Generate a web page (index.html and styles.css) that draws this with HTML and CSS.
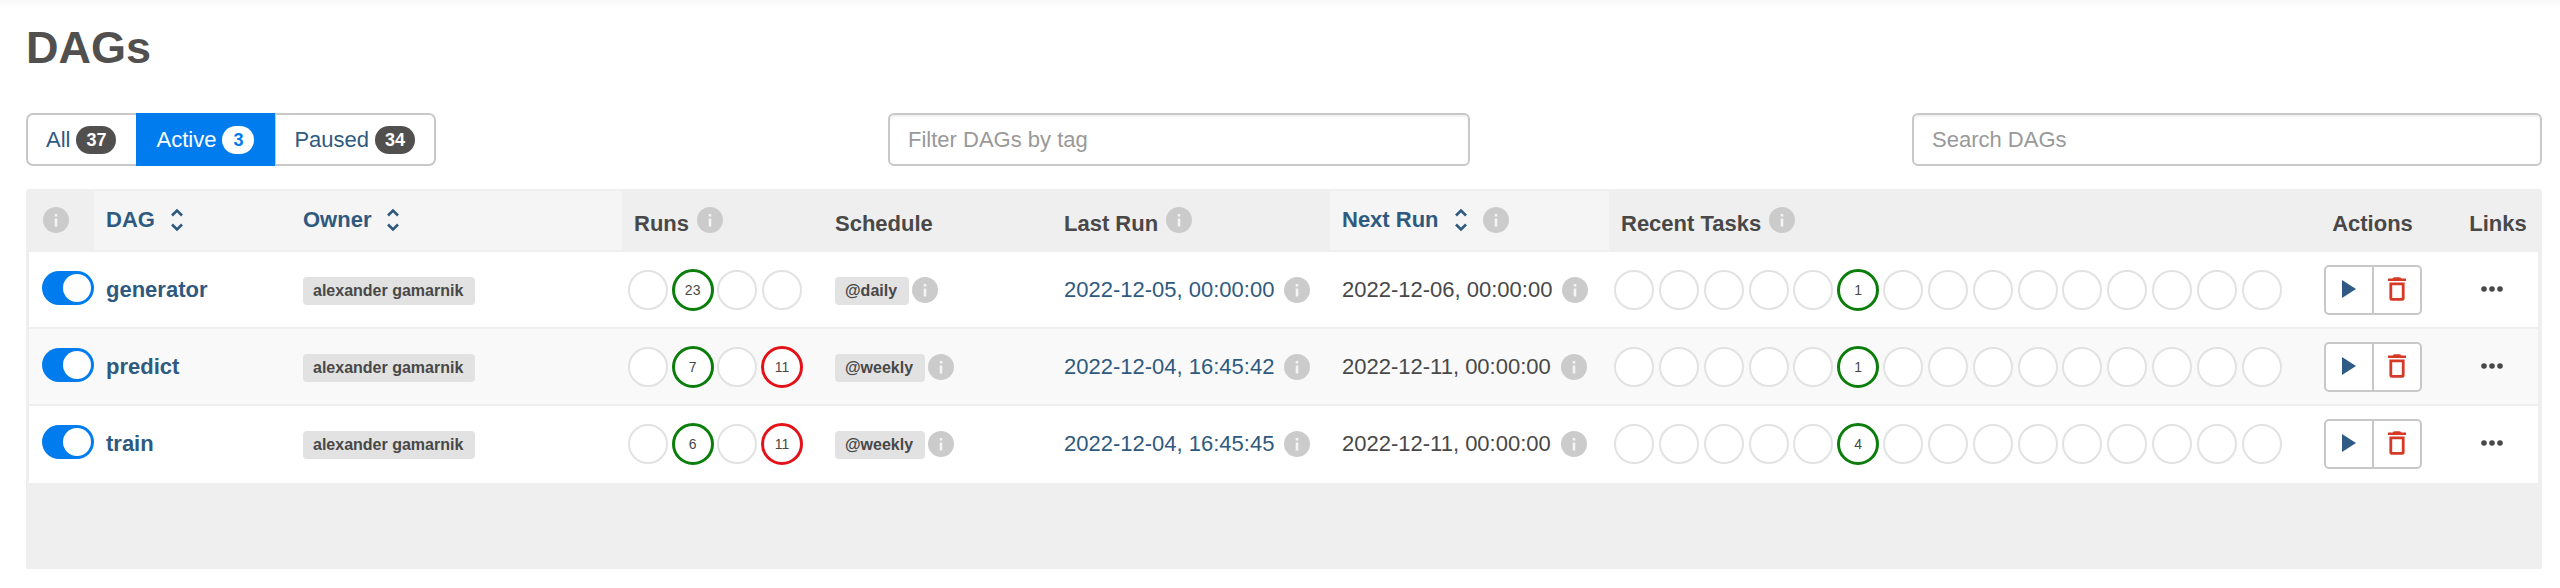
FILE: index.html
```html
<!DOCTYPE html>
<html lang="en">
<head>
<meta charset="utf-8">
<title>DAGs</title>
<link rel="stylesheet" href="styles.css">
</head>
<body>
<svg class="sprite" aria-hidden="true">
  <symbol id="info" viewBox="0 0 26 26"><circle cx="13" cy="13" r="13" fill="#cbcbcb"/><path d="M13 7v2.6M13 11.6v8" stroke="#f4f4f4" stroke-width="2.6"/></symbol>
  <symbol id="sort" viewBox="0 0 14 24"><path d="M2 7.500l5-5 5 5M2 16.500l5 5 5-5" fill="none" stroke="#2f5a80" stroke-width="2.600"/></symbol>
  <symbol id="play" viewBox="0 0 14 18"><path d="M0 0l14 9-14 9z" fill="#2f5a85"/></symbol>
  <symbol id="trash" viewBox="0 0 18 24"><path d="M0 1.600h4.500Q5.500.2 7 .2h4q1.500 0 2.500 1.400H18v2.400H0zM1.400 5.600h15.200v15.600a2.500 2.500 0 0 1-2.500 2.500H3.900a2.500 2.500 0 0 1-2.500-2.500zM4.200 8.300v12.700h9.600V8.300z" fill="#d43a26" fill-rule="evenodd"/></symbol>
  <symbol id="dots" viewBox="0 0 22 6"><g fill="#484848"><circle cx="3" cy="3" r="2.800"/><circle cx="11" cy="3" r="2.800"/><circle cx="19" cy="3" r="2.800"/></g></symbol>
</svg>
<main class="page">
  <h2 class="title">DAGs</h2>
  <div class="toolbar">
    <nav class="filters" aria-label="DAG status">
      <a class="filter" href="#all">All <span class="badge">37</span></a>
      <a class="filter active" href="#active">Active <span class="badge">3</span></a>
      <a class="filter" href="#paused">Paused <span class="badge">34</span></a>
    </nav>
    <input class="field tag-field" type="text" placeholder="Filter DAGs by tag" aria-label="Filter DAGs by tag">
    <input class="field search-field" type="search" placeholder="Search DAGs" aria-label="Search DAGs">
  </div>
  <div class="card">
    <table class="dags">
      <colgroup><col class="c-toggle"><col class="c-dag"><col class="c-owner"><col class="c-runs"><col class="c-schedule"><col class="c-last"><col class="c-next"><col class="c-tasks"><col class="c-actions"><col class="c-links"></colgroup>
      <thead>
        <tr>
          <th><span class="head"><svg class="info"><use href="#info"/></svg></span></th>
          <th class="sortable"><a class="head" href="#dag">DAG <svg class="sort"><use href="#sort"/></svg></a></th>
          <th class="sortable"><a class="head" href="#owner">Owner <svg class="sort"><use href="#sort"/></svg></a></th>
          <th><span class="head">Runs <svg class="info"><use href="#info"/></svg></span></th>
          <th><span class="head">Schedule</span></th>
          <th><span class="head">Last Run <svg class="info"><use href="#info"/></svg></span></th>
          <th class="sortable"><a class="head" href="#next">Next Run <svg class="sort"><use href="#sort"/></svg><svg class="info"><use href="#info"/></svg></a></th>
          <th><span class="head">Recent Tasks <svg class="info"><use href="#info"/></svg></span></th>
          <th><span class="head centered">Actions</span></th>
          <th><span class="head centered">Links</span></th>
        </tr>
      </thead>
      <tbody>
        <tr>
          <td><input class="toggle" type="checkbox" checked aria-label="generator active"></td>
          <td><a class="dag" href="#generator">generator</a></td>
          <td><div class="line tagged"><a class="label" href="#o">alexander gamarnik</a></div></td>
          <td class="runs"><div class="circles"><i></i><i class="ok">23</i><i></i><i></i></div></td>
          <td><div class="line tagged"><a class="label" href="#s">@daily</a><svg class="info"><use href="#info"/></svg></div></td>
          <td><div class="line"><a href="#l">2022-12-05, 00:00:00</a><svg class="info"><use href="#info"/></svg></div></td>
          <td><div class="line"><time>2022-12-06, 00:00:00</time><svg class="info"><use href="#info"/></svg></div></td>
          <td class="tasks"><div class="circles"><i></i><i></i><i></i><i></i><i></i><i class="ok">1</i><i></i><i></i><i></i><i></i><i></i><i></i><i></i><i></i><i></i></div></td>
          <td><div class="actions"><button type="button" aria-label="Trigger DAG"><svg class="play"><use href="#play"/></svg></button><button type="button" aria-label="Delete DAG"><svg class="trash"><use href="#trash"/></svg></button></div></td>
          <td><a class="more" href="#m" aria-label="Links"><svg class="dots"><use href="#dots"/></svg></a></td>
        </tr>
        <tr>
          <td><input class="toggle" type="checkbox" checked aria-label="predict active"></td>
          <td><a class="dag" href="#predict">predict</a></td>
          <td><div class="line tagged"><a class="label" href="#o">alexander gamarnik</a></div></td>
          <td class="runs"><div class="circles"><i></i><i class="ok">7</i><i></i><i class="failed">11</i></div></td>
          <td><div class="line tagged"><a class="label" href="#s">@weekly</a><svg class="info"><use href="#info"/></svg></div></td>
          <td><div class="line"><a href="#l">2022-12-04, 16:45:42</a><svg class="info"><use href="#info"/></svg></div></td>
          <td><div class="line"><time>2022-12-11, 00:00:00</time><svg class="info"><use href="#info"/></svg></div></td>
          <td class="tasks"><div class="circles"><i></i><i></i><i></i><i></i><i></i><i class="ok">1</i><i></i><i></i><i></i><i></i><i></i><i></i><i></i><i></i><i></i></div></td>
          <td><div class="actions"><button type="button" aria-label="Trigger DAG"><svg class="play"><use href="#play"/></svg></button><button type="button" aria-label="Delete DAG"><svg class="trash"><use href="#trash"/></svg></button></div></td>
          <td><a class="more" href="#m" aria-label="Links"><svg class="dots"><use href="#dots"/></svg></a></td>
        </tr>
        <tr>
          <td><input class="toggle" type="checkbox" checked aria-label="train active"></td>
          <td><a class="dag" href="#train">train</a></td>
          <td><div class="line tagged"><a class="label" href="#o">alexander gamarnik</a></div></td>
          <td class="runs"><div class="circles"><i></i><i class="ok">6</i><i></i><i class="failed">11</i></div></td>
          <td><div class="line tagged"><a class="label" href="#s">@weekly</a><svg class="info"><use href="#info"/></svg></div></td>
          <td><div class="line"><a href="#l">2022-12-04, 16:45:45</a><svg class="info"><use href="#info"/></svg></div></td>
          <td><div class="line"><time>2022-12-11, 00:00:00</time><svg class="info"><use href="#info"/></svg></div></td>
          <td class="tasks"><div class="circles"><i></i><i></i><i></i><i></i><i></i><i class="ok">4</i><i></i><i></i><i></i><i></i><i></i><i></i><i></i><i></i><i></i></div></td>
          <td><div class="actions"><button type="button" aria-label="Trigger DAG"><svg class="play"><use href="#play"/></svg></button><button type="button" aria-label="Delete DAG"><svg class="trash"><use href="#trash"/></svg></button></div></td>
          <td><a class="more" href="#m" aria-label="Links"><svg class="dots"><use href="#dots"/></svg></a></td>
        </tr>
      </tbody>
    </table>
  </div>
</main>
</body>
</html>
```
FILE: styles.css
```css
* { box-sizing: border-box; }
body {
  margin: 0;
  background: linear-gradient(#f8f8f8, #fff 8px) no-repeat #fff;
  color: #484848;
  font: 22px/30px "Liberation Sans", Arial, sans-serif;
}
a { color: #2f5a80; text-decoration: none; }
svg { display: block; flex: none; }
.sprite { position: absolute; width: 0; height: 0; }
.page { padding: 18px 18px 18px 26px; }

.title {
  margin: 0 0 35px;
  font-size: 45px;
  line-height: 60px;
  font-weight: 700;
  color: #51504f;
}

.toolbar {
  display: grid;
  grid-template-columns: 862fr 582fr 442fr 630fr;
  align-items: start;
  margin-bottom: 23px;
}
.filters { display: flex; justify-self: start; }
.filter {
  display: flex;
  align-items: center;
  gap: 6px;
  height: 53px;
  padding: 0 19px 0 18px;
  border: 2px solid #c8c8c8;
}
.filter:first-child { padding-right: 20px; border-right: 0; border-radius: 7px 0 0 7px; }
.filter:last-child { border-left-width: 1px; border-radius: 0 7px 7px 0; }
.filter.active { background: #007cee; border-color: #007cee; color: #fff; }
.badge {
  min-width: 32px;
  padding: 0 10px;
  border-radius: 14px;
  background: #51504f;
  color: #fff;
  font-size: 18px;
  line-height: 28px;
  font-weight: 700;
  text-align: center;
}
.active .badge { background: #fff; color: #007cee; }
.field {
  width: 100%;
  height: 53px;
  padding: 0 18px;
  border: 2px solid #c8c8c8;
  border-radius: 6px;
  background: #fff;
  box-shadow: inset 0 2px 2px rgba(0, 0, 0, .06);
  color: #484848;
  font: inherit;
  appearance: none;
}
.field::placeholder { color: #999; opacity: 1; }
.search-field { grid-column: 4; }

.card {
  padding: 0 4px 86px 3px;
  border-radius: 4px 4px 0 0;
  background: #efefef;
}
.dags { width: 100%; table-layout: fixed; border-collapse: separate; border-spacing: 0; }
.c-toggle { width: 65px; }
.c-dag { width: 197px; }
.c-owner { width: 331px; }
.c-runs { width: 201px; }
.c-schedule { width: 229px; }
.c-last { width: 278px; }
.c-next { width: 279px; }
.c-tasks { width: 678px; }
.c-actions { width: 171px; }
.c-links { width: 80px; }

th {
  height: 63px;
  padding: 16px 12px 0;
  border: solid #efefef;
  border-width: 2px 0;
  text-align: left;
  vertical-align: top;
  white-space: nowrap;
}
th:first-child { padding-left: 14px; }
.sortable { background: #f5f5f5; }
.head { display: flex; gap: 8px; line-height: 34px; }
.sortable .head { align-items: center; gap: 15px; line-height: 26px; }
.centered { justify-content: center; }
.info { width: 26px; height: 26px; }
.sort { width: 14px; height: 24px; }

td {
  height: 77px;
  padding: 0 12px;
  border-bottom: 2px solid #efefef;
  background: #fff;
  vertical-align: middle;
  white-space: nowrap;
}
td:first-child { padding: 0 12px 3px 13px; }
tbody tr:nth-child(even) td { background: #f9f9f9; }
tbody tr:last-child td { border-bottom-color: #fff; }
.line { display: flex; align-items: center; gap: 10px; }
.tagged { gap: 3px; }
.dag { display: block; font-weight: 700; }
.label {
  margin-top: 2px;
  padding: 0 12px 0 10px;
  border-radius: 4px;
  background: #e2e2e2;
  color: #484848;
  font-size: 16px;
  line-height: 28px;
  font-weight: 700;
}

.toggle {
  display: block;
  width: 52px;
  height: 34px;
  margin: 0;
  padding: 3px;
  border-radius: 17px;
  background: #007cee;
  appearance: none;
}
.toggle::before {
  content: "";
  display: block;
  width: 28px;
  height: 28px;
  margin-left: auto;
  border-radius: 50%;
  background: #fff;
}

td.runs { padding: 0 21px 0 6px; }
td.tasks { padding: 0 5px; }
.circles { display: flex; justify-content: space-between; }
.circles i {
  width: 40px;
  height: 40px;
  border: 2px solid #e2e2e2;
  border-radius: 50%;
  background: #fff;
  font-size: 14px;
  line-height: 36px;
  font-style: normal;
  text-align: center;
}
.circles .ok, .circles .failed {
  width: 42px;
  height: 42px;
  margin: -1px;
  border: 3px solid #0b7d0b;
}
.circles .failed { border-color: #e31219; }

.actions { display: flex; justify-content: center; }
.actions button {
  display: flex;
  align-items: center;
  justify-content: center;
  width: 49px;
  height: 50px;
  padding: 0 0 2px;
  border: 2px solid #c8c8c8;
  border-radius: 5px 0 0 5px;
  background: #fff;
}
.actions button + button { border-left-width: 1px; border-radius: 0 5px 5px 0; }
.actions button:first-child { border-right-width: 1px; }
.play { width: 14px; height: 18px; }
.trash { width: 18px; height: 24px; }
.more { display: flex; padding: 0 11px 2px; }
.dots { width: 22px; height: 6px; }
```
